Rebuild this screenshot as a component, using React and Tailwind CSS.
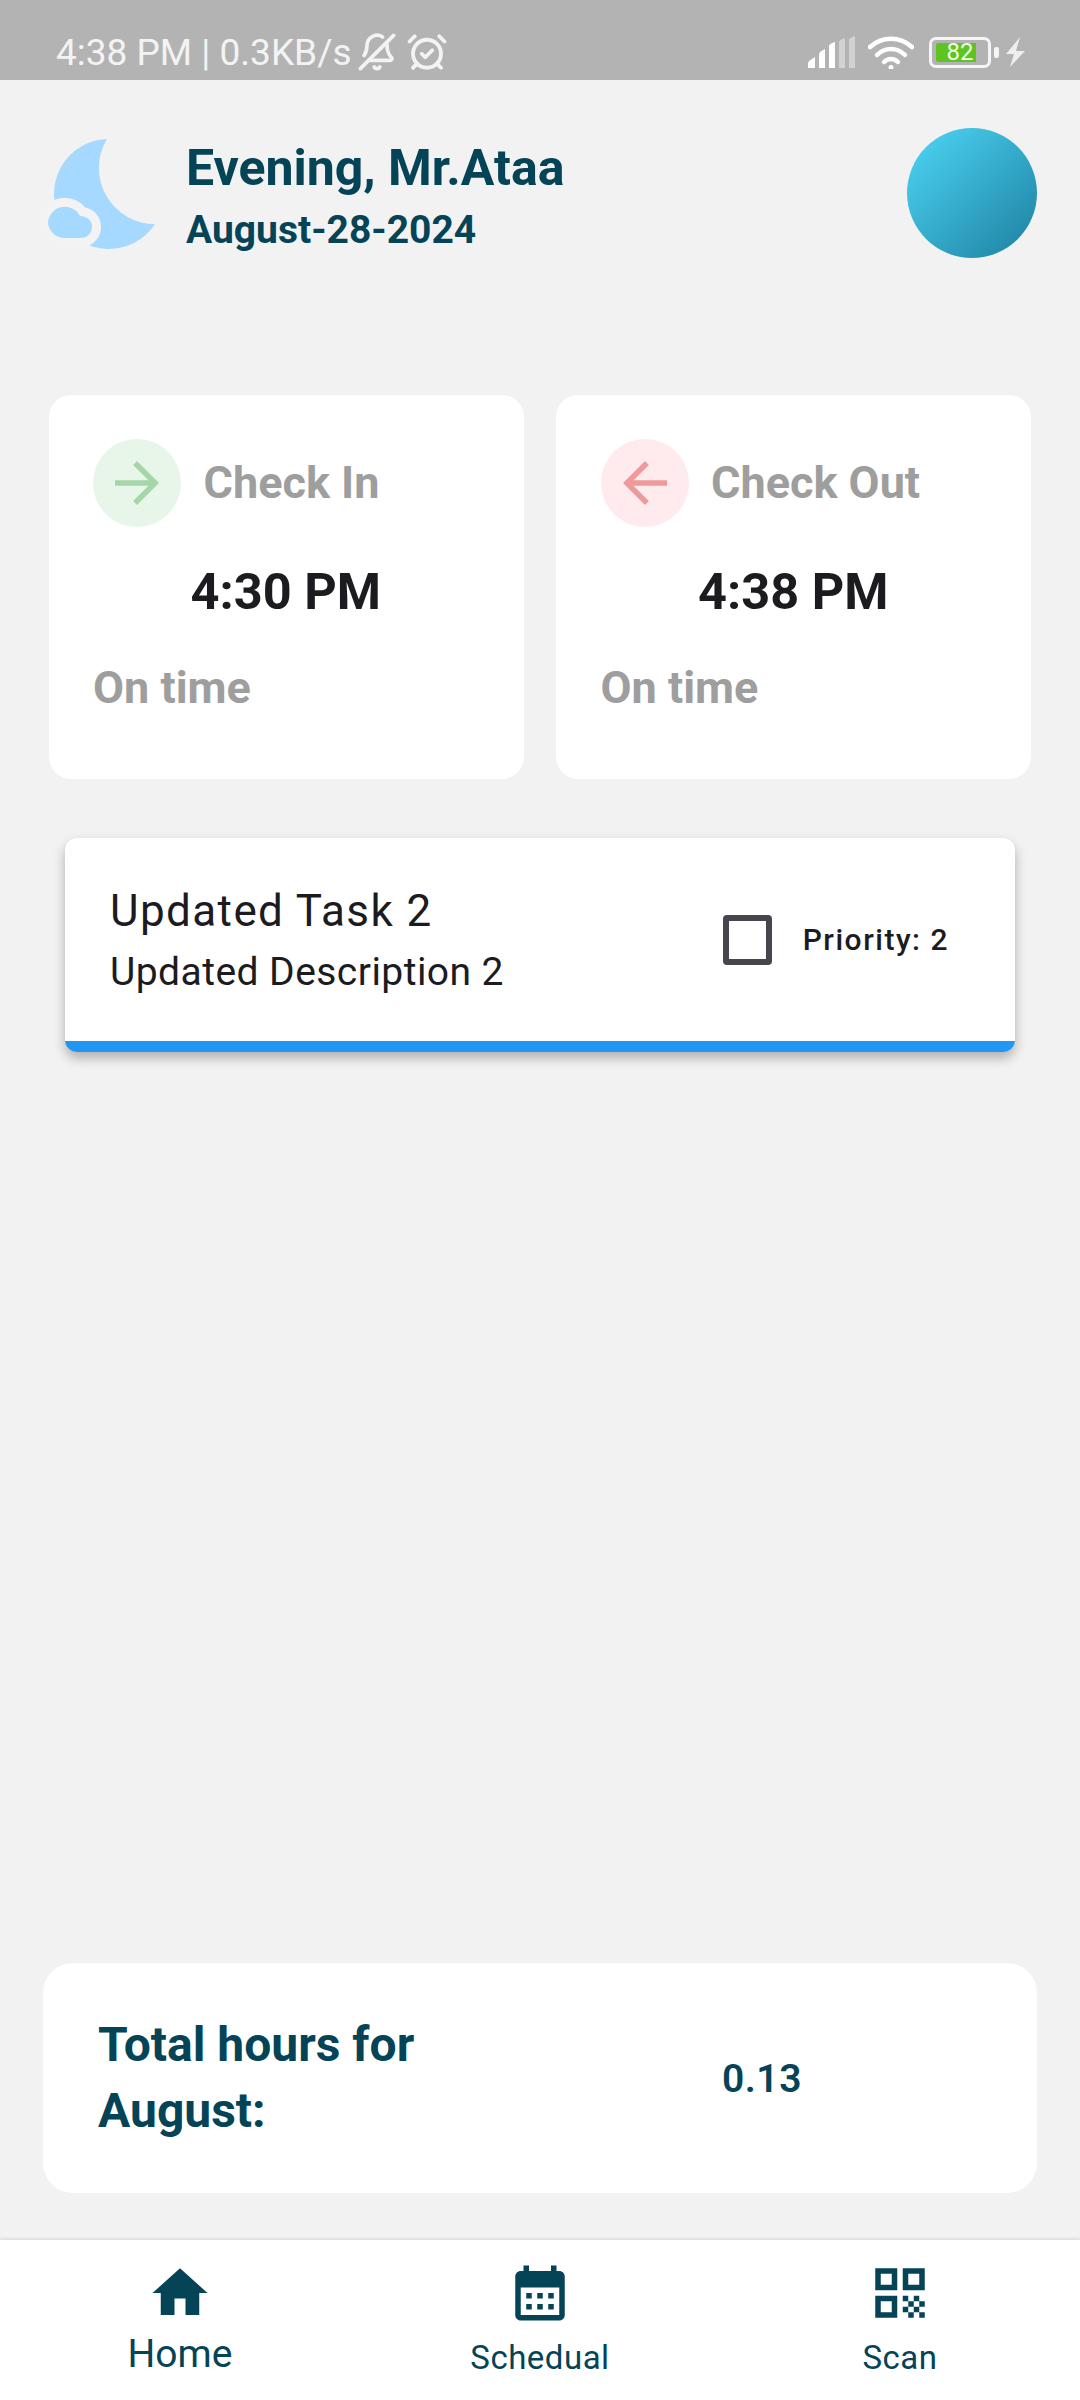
import { BellOff, AlarmClockCheck } from "lucide-react";

const HOME = "M10 20v-6h4v6h5v-8h3L12 3 2 12h3v8z";
const CALENDAR =
  "M19 4h-1V2h-2v2H8V2H6v2H5c-1.11 0-1.99.9-1.99 2L3 20c0 1.1.89 2 2 2h14c1.1 0 2-.9 2-2V6c0-1.1-.9-2-2-2zm0 16H5V10h14v10zM9 14H7v-2h2v2zm4 0h-2v-2h2v2zm4 0h-2v-2h2v2zm-8 4H7v-2h2v2zm4 0h-2v-2h2v2zm4 0h-2v-2h2v2z";
const QR =
  "M3 11h8V3H3v8zm2-6h4v4H5V5zM3 21h8v-8H3v8zm2-6h4v4H5v-4zM13 3v8h8V3h-8zm6 6h-4V5h4v4zM19 19h2v2h-2zM13 13h2v2h-2zM15 15h2v2h-2zM13 17h2v2h-2zM15 19h2v2h-2zM17 17h2v2h-2zM17 13h2v2h-2zM19 15h2v2h-2z";
const ARROW_RIGHT = "M12 4l-1.41 1.41L16.17 11H4v2h12.17l-5.58 5.59L12 20l8-8z";
const ARROW_LEFT = "M20 11H7.83l5.59-5.59L12 4l-8 8 8 8 1.41-1.41L7.83 13H20v-2z";

const MaterialIcon = ({ d, className }) => (
  <svg viewBox="0 0 24 24" className={className} fill="currentColor">
    <path d={d} />
  </svg>
);

const MoonIcon = () => (
  <svg viewBox="0 0 140 140" className="w-[140px] h-[140px]">
    <path d="M77 19A55 55 0 1 0 125 104A56 56 0 0 1 77 19Z" fill="#a6d9ff" />
    <path
      d="M33 118A16.5 16.5 0 0 1 18 102A17 17 0 0 1 50 96A11 11 0 0 1 52 118Z"
      fill="#a6d9ff"
      stroke="#f3f3f3"
      strokeWidth="18"
      paintOrder="stroke"
      strokeLinejoin="round"
    />
  </svg>
);

const StatusBar = () => (
  <div className="h-[80px] shrink-0 bg-[#b3b3b3] flex items-center pt-[24px] pl-[56px] pr-[55px] text-[#f3f3f3]">
    <span className="text-[37px] leading-[44px] whitespace-nowrap w-[301px] mt-[2px]">4:38 PM | 0.3KB/s</span>
    <BellOff className="w-[40px] h-[40px] -scale-x-100" strokeWidth={2.2} />
    <AlarmClockCheck className="ml-[9px] w-[42px] h-[42px]" strokeWidth={2.2} />
    <div className="flex-1" />
    <svg viewBox="0 0 47 32" className="w-[47px] h-[32px]">
      <path d="M0 32V27Q0 25 7 21V32Z" fill="#fff" />
      <path d="M11 32V18Q11 16 17 13V32Z" fill="#fff" />
      <path d="M21 32V10Q21 8 27 6V32Z" fill="#fff" />
      <path d="M31 32V6Q31 4 37 2V32Z" fill="#d2d2d2" />
      <path d="M41 32V4Q41 2 47 0V32Z" fill="#d2d2d2" />
    </svg>
    <svg viewBox="0 0 46 34" className="ml-[13px] w-[46px] h-[34px]" fill="none" stroke="#fff" strokeWidth="4.5" strokeLinecap="round">
      <path d="M2 12C14 1 32 1 44 12" />
      <path d="M9 20C17 12 29 12 37 20" />
      <path d="M16 27C20 23 26 23 30 27" />
      <path d="M23 32.5V32.6" strokeWidth="5" />
    </svg>
    <div className="ml-[15px] relative w-[62px] h-[31px] border-[3px] border-[#f5f5f5] rounded-[7px]">
      <div className="absolute left-[4px] top-[3px] w-[40px] h-[19px] bg-[#5fc421] rounded-l-[2px]" />
      <span className="absolute left-0 top-0 w-[56px] text-center text-[24px] leading-[25px] text-[#eefbe4]">82</span>
    </div>
    <div className="ml-[3px] w-[5px] h-[11px] rounded-[2px] bg-[#f5f5f5]" />
    <svg viewBox="0 0 19 30" className="ml-[7px] w-[19px] h-[30px]">
      <path d="M14 0L0 17H8L4 30L19 14H10Z" fill="#eeeeee" />
    </svg>
  </div>
);

const AttendanceCard = ({ d, circle, arrow, label, time }) => (
  <div className="w-[475px] h-[384px] bg-white rounded-[22px] pt-[44px] pl-[44.5px]">
    <div className="flex items-center gap-[22.5px]">
      <div className={`w-[88px] h-[88px] rounded-full flex items-center justify-center ${circle}`}>
        <MaterialIcon d={d} className={`w-[66px] h-[66px] ${arrow}`} />
      </div>
      <span className="text-[45px] leading-[52px] font-bold text-[#9e9e9e]">{label}</span>
    </div>
    <p className="mt-[36px] pr-[45px] text-center text-[50.5px] leading-[58px] font-bold text-[#1c1b1f]">{time}</p>
    <p className="mt-[41px] text-[45px] leading-[52px] font-bold text-[#9e9e9e]">On time</p>
  </div>
);

const NavItem = ({ d, label, labelClass }) => (
  <div className="flex flex-col items-center text-[#054457]">
    <MaterialIcon d={d} className="w-[66px] h-[66px]" />
    <span className={labelClass}>{label}</span>
  </div>
);

const App = () => {
  return (
    <div className="w-[1080px] h-[2400px] flex flex-col bg-[#f2f2f2] [font-family:Roboto,sans-serif]">
      <StatusBar />

      {/* Header */}
      <div className="h-[178px] mt-[48px] flex items-start pr-[43px]">
        <div className="ml-[30px] -mt-[8px]">
          <MoonIcon />
        </div>
        <div className="ml-[16px] mt-[14px] text-[#054457] font-bold">
          <p className="text-[50px] leading-[52px]">Evening, Mr.Ataa</p>
          <p className="mt-[14px] text-[39px] leading-[44px]">August-28-2024</p>
        </div>
        <div className="ml-auto w-[130px] h-[130px] rounded-full bg-gradient-to-br from-[#4fd8f8] to-[#1c80a0]" />
      </div>

      {/* Check in / out */}
      <div className="mt-[89px] pl-[48.5px] flex gap-[32.5px]">
        <AttendanceCard
          d={ARROW_RIGHT}
          circle="bg-[#e8f5e9]"
          arrow="text-[#a5d6a7]"
          label="Check In"
          time="4:30 PM"
        />
        <AttendanceCard
          d={ARROW_LEFT}
          circle="bg-[#ffebee]"
          arrow="text-[#ef9a9a]"
          label="Check Out"
          time="4:38 PM"
        />
      </div>

      {/* Task */}
      <div className="mt-[59px] mx-[65px] h-[214px] bg-white rounded-[12px] overflow-hidden flex flex-col shadow-[0_6px_12px_rgba(0,0,0,0.28)]">
        <div className="flex-1 flex items-center pl-[45px] pr-[66px]">
          <div className="flex-1 text-[#1c1b1f]">
            <p className="text-[44px] leading-[52px] tracking-[1.4px] -mt-[1px]">Updated Task 2</p>
            <p className="mt-[13px] text-[39px] leading-[44px] tracking-[0.45px]">Updated Description 2</p>
          </div>
          <div className="w-[49px] h-[50px] border-[6px] border-[#49454f] rounded-[4px] ml-[2px]" />
          <span className="ml-[31px] text-[30px] leading-[36px] tracking-[1.5px] font-medium text-[#1c1b1f] mt-[1px]">Priority: 2</span>
        </div>
        <div className="h-[11px] bg-[#2196f3]" />
      </div>

      {/* Total hours */}
      <div className="mt-auto mx-[43px] h-[230px] bg-white rounded-[30px] flex items-center pl-[55px] text-[#054457] font-bold">
        <p className="w-[624px] text-[48px] leading-[66px]">
          Total hours for
          <br />
          August:
        </p>
        <span className="text-[39px] leading-[44px] font-semibold tracking-[0.5px] mt-[1px]">0.13</span>
      </div>

      {/* Bottom nav */}
      <div className="mt-[47px] h-[160px] shrink-0 bg-white grid grid-cols-3 pt-[20px] shadow-[0_-1px_3px_rgba(0,0,0,0.12)]">
        <NavItem d={HOME} label="Home" labelClass="mt-[6px] text-[39px] leading-[44px]" />
        <NavItem d={CALENDAR} label="Schedual" labelClass="mt-[12px] text-[33px] leading-[40px] tracking-[0.5px]" />
        <NavItem d={QR} label="Scan" labelClass="mt-[12px] text-[33px] leading-[40px] tracking-[0.5px]" />
      </div>
    </div>
  );
};

export default App;
